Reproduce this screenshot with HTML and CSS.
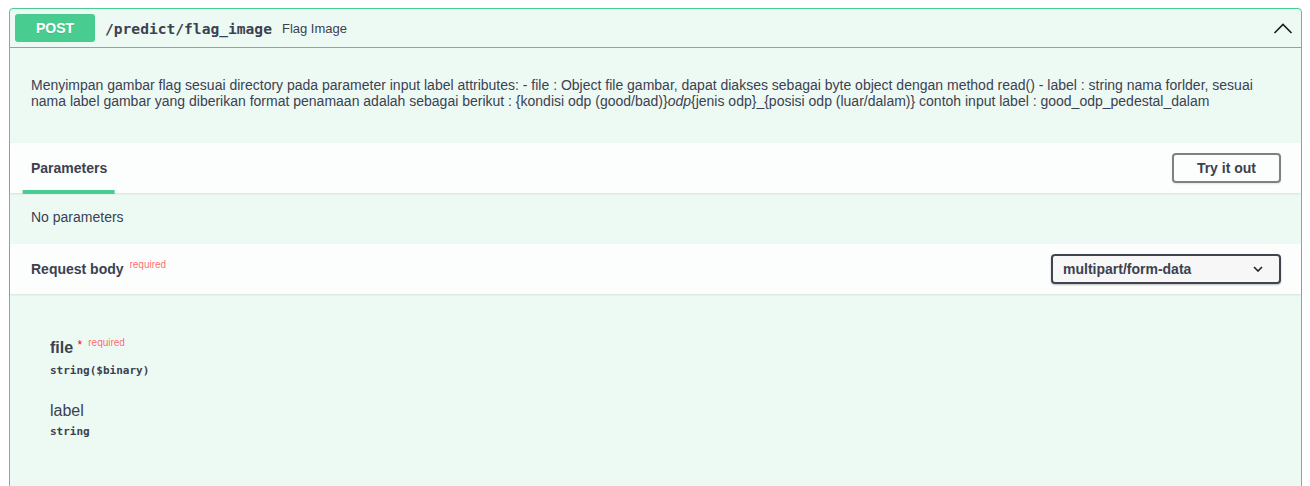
FILE: index.html
```html
<!DOCTYPE html>
<html lang="id">
<head>
<meta charset="utf-8">
<title>POST /predict/flag_image</title>
<link rel="stylesheet" href="styles.css">
</head>
<body>
<div class="page">
  <div class="opblock">
    <div class="summary">
      <span class="method">POST</span>
      <span class="path">/predict/flag_image</span>
      <span class="summary-desc">Flag Image</span>
      <svg class="arrow" width="20" height="20" viewBox="0 0 20 20" aria-hidden="true"><polyline points="1.5,14 10,5.5 18.5,14" fill="none" stroke="#1b1b1b" stroke-width="1.6"/></svg>
    </div>
    <div class="body">
      <div class="description">
        <p>Menyimpan gambar flag sesuai directory pada parameter input label attributes: - file : Object file gambar, dapat diakses sebagai byte object dengan method read() - label : string nama forlder, sesuai nama label gambar yang diberikan format penamaan adalah sebagai berikut : {kondisi odp (good/bad)}<em>odp</em>{jenis odp}_{posisi odp (luar/dalam)} contoh input label : good_odp_pedestal_dalam</p>
      </div>
      <div class="section-header">
        <div class="tab">Parameters</div>
        <button class="try-btn">Try it out</button>
      </div>
      <div class="no-params">No parameters</div>
      <div class="section-header">
        <div class="rb-title">Request body <span class="req-small">required</span></div>
        <div class="select">
          <span>multipart/form-data</span>
          <svg width="10" height="6" viewBox="0 0 10 6" aria-hidden="true"><polyline points="1,1 5,5 9,1" fill="none" stroke="#222" stroke-width="1.6"/></svg>
        </div>
      </div>
      <div class="rb-body">
        <div class="param">
          <div class="pname pname-req">file <span class="star">*</span><span class="req-small">required</span></div>
          <div class="ptype">string($binary)</div>
        </div>
        <div class="param">
          <div class="pname">label</div>
          <div class="ptype">string</div>
        </div>
      </div>
    </div>
  </div>
</div>
</body>
</html>
```

FILE: styles.css
```css
* { box-sizing: border-box; }
html, body { margin: 0; padding: 0; background: #fff; }
body {
  font-family: "Liberation Sans", Arial, sans-serif;
  color: #3b4151;
  height: 486px;
  overflow: hidden;
}
.page { padding: 8px 8px 0 9px; }
.opblock {
  border: 1px solid #49cc90;
  border-radius: 4px;
  background: #edfaf4;
  height: 600px;
}
.summary {
  display: flex;
  align-items: center;
  padding: 5px;
  border-bottom: 1px solid #49cc90;
  height: 39px;
}
.method {
  width: 80px;
  height: 28px;
  background: #49cc90;
  color: #fff;
  border-radius: 3px;
  font-weight: 700;
  font-size: 14px;
  display: flex;
  align-items: center;
  justify-content: center;
  text-shadow: 0 1px 0 rgba(0,0,0,.1);
}
.path {
  font-family: "DejaVu Sans Mono", monospace;
  font-weight: 700;
  font-size: 14.6px;
  padding: 0 10px;
  color: #3b4151;
}
.summary-desc {
  font-size: 13px;
  color: #3b4151;
  flex: 1;
}
.arrow { margin-right: 3px; margin-top: 1px; }
.description {
  padding: 29px 20px 34px 21px;
}
.description p {
  margin: 0;
  font-size: 14px;
  line-height: 16px;
}
.section-header {
  display: flex;
  align-items: center;
  justify-content: space-between;
  min-height: 50px;
  padding: 8px 20px;
  background: rgba(255,255,255,.8);
  box-shadow: 0 1px 2px rgba(0,0,0,.1);
  position: relative;
}
.tab {
  font-weight: 700;
  font-size: 14px;
  position: relative;
  padding-left: 1px;
}
.tab::after {
  content: "";
  position: absolute;
  left: 50%;
  transform: translateX(-50%);
  bottom: -18px;
  width: 120%;
  height: 4px;
  background: #49cc90;
}
.try-btn {
  font-family: "Liberation Sans", Arial, sans-serif;
  font-weight: 700;
  font-size: 14px;
  color: #3b4151;
  background: transparent;
  border: 2px solid #808080;
  border-radius: 4px;
  padding: 5px 23px;
  line-height: 16px;
  box-shadow: 0 1px 2px rgba(0,0,0,.1);
}
.no-params {
  font-size: 14px;
  line-height: 17px;
  padding: 16px 21px 18px;
}
.rb-title {
  font-weight: 700;
  font-size: 14px;
  padding-left: 1px;
}
.req-small {
  font-size: 10px;
  font-weight: 400;
  color: rgba(255,0,0,.6);
  position: relative;
  top: -6px;
  margin-left: 2px;
}
.select {
  width: 230px;
  height: 30px;
  border: 2px solid #41444e;
  border-radius: 4px;
  background: #f7f7f7;
  box-shadow: 0 1px 2px rgba(0,0,0,.25);
  display: flex;
  align-items: center;
  justify-content: space-between;
  padding: 0 16px 0 10px;
  font-weight: 700;
  font-size: 14px;
}
.rb-body {
  padding: 45px 20px 0 40px;
}
.param { margin-bottom: 20px; }
.pname {
  font-size: 16px;
  line-height: 18px;
  color: #3b4151;
}
.pname-req { font-weight: 700; }
.star {
  color: red;
  font-size: 12px;
  position: relative;
  top: -4px;
  font-weight: 400;
}
.pname-req .req-small { margin-left: 6px; top: -7px; }
.ptype {
  font-family: "DejaVu Sans Mono", monospace;
  font-weight: 600;
  font-size: 11px;
  line-height: 13px;
  padding: 5px 0;
}
```
